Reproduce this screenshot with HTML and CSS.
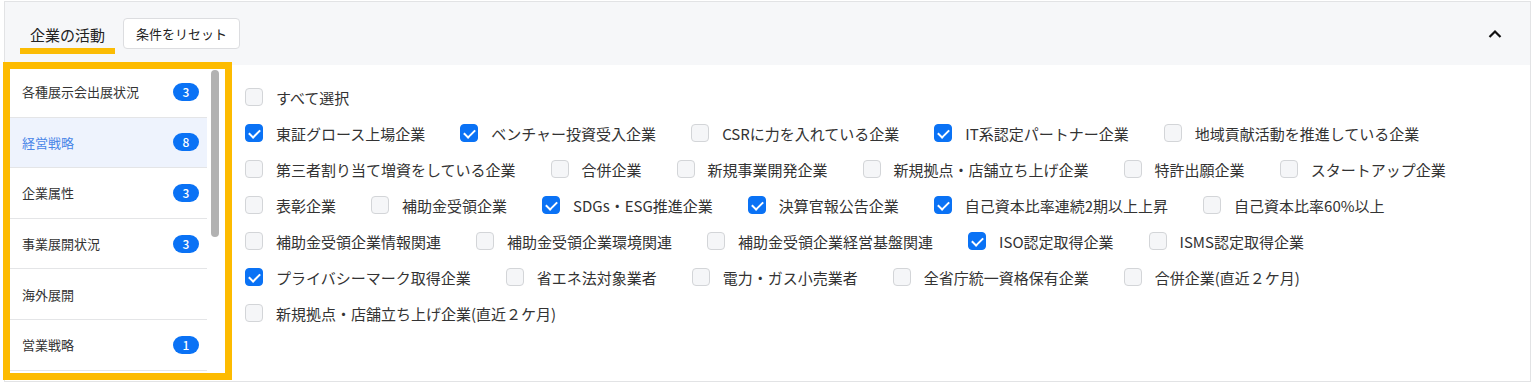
FILE: index.html
```html
<!DOCTYPE html>
<html lang="ja">
<head>
<meta charset="utf-8">
<link rel="stylesheet" href="styles.css">
</head>
<body>
<div class="card">
  <div class="card-header">
    <div class="tab">企業の活動</div>
    <button class="reset-btn">条件をリセット</button>
    <div class="spacer"></div>
    <svg class="chevron" width="14" height="10" viewBox="0 0 14 10"><path d="M1.5 8L7 2.5 12.5 8" fill="none" stroke="#111" stroke-width="2.2"/></svg>
  </div>
  <div class="card-body">
    <div class="sidebar">
      <div class="side-scroll">
        <ul class="side-list">
          <li class="side-item first"><span>各種展示会出展状況</span><span class="badge">3</span></li>
          <li class="side-item active"><span>経営戦略</span><span class="badge">8</span></li>
          <li class="side-item"><span>企業属性</span><span class="badge">3</span></li>
          <li class="side-item"><span>事業展開状況</span><span class="badge">3</span></li>
          <li class="side-item"><span>海外展開</span></li>
          <li class="side-item"><span>営業戦略</span><span class="badge">1</span></li>
        </ul>
      </div>
      <div class="scrollbar"><div class="thumb"></div></div>
    </div>
    <div class="options">
      <div class="opt-row">
        <label class="opt"><span class="cb"></span><span class="lbl">すべて選択</span></label>
      </div>
      <div class="opt-wrap">
        <label class="opt"><span class="cb on"></span><span class="lbl">東証グロース上場企業</span></label>
        <label class="opt"><span class="cb on"></span><span class="lbl">ベンチャー投資受入企業</span></label>
        <label class="opt"><span class="cb"></span><span class="lbl">CSRに力を入れている企業</span></label>
        <label class="opt"><span class="cb on"></span><span class="lbl">IT系認定パートナー企業</span></label>
        <label class="opt"><span class="cb"></span><span class="lbl">地域貢献活動を推進している企業</span></label>
        <label class="opt"><span class="cb"></span><span class="lbl">第三者割り当て増資をしている企業</span></label>
        <label class="opt"><span class="cb"></span><span class="lbl">合併企業</span></label>
        <label class="opt"><span class="cb"></span><span class="lbl">新規事業開発企業</span></label>
        <label class="opt"><span class="cb"></span><span class="lbl">新規拠点・店舗立ち上げ企業</span></label>
        <label class="opt"><span class="cb"></span><span class="lbl">特許出願企業</span></label>
        <label class="opt"><span class="cb"></span><span class="lbl">スタートアップ企業</span></label>
        <label class="opt"><span class="cb"></span><span class="lbl">表彰企業</span></label>
        <label class="opt"><span class="cb"></span><span class="lbl">補助金受領企業</span></label>
        <label class="opt"><span class="cb on"></span><span class="lbl">SDGs・ESG推進企業</span></label>
        <label class="opt"><span class="cb on"></span><span class="lbl">決算官報公告企業</span></label>
        <label class="opt"><span class="cb on"></span><span class="lbl">自己資本比率連続2期以上上昇</span></label>
        <label class="opt"><span class="cb"></span><span class="lbl">自己資本比率60%以上</span></label>
        <label class="opt"><span class="cb"></span><span class="lbl">補助金受領企業情報関連</span></label>
        <label class="opt"><span class="cb"></span><span class="lbl">補助金受領企業環境関連</span></label>
        <label class="opt"><span class="cb"></span><span class="lbl">補助金受領企業経営基盤関連</span></label>
        <label class="opt"><span class="cb on"></span><span class="lbl">ISO認定取得企業</span></label>
        <label class="opt"><span class="cb"></span><span class="lbl">ISMS認定取得企業</span></label>
        <label class="opt"><span class="cb on"></span><span class="lbl">プライバシーマーク取得企業</span></label>
        <label class="opt"><span class="cb"></span><span class="lbl">省エネ法対象業者</span></label>
        <label class="opt"><span class="cb"></span><span class="lbl">電力・ガス小売業者</span></label>
        <label class="opt"><span class="cb"></span><span class="lbl">全省庁統一資格保有企業</span></label>
        <label class="opt"><span class="cb"></span><span class="lbl">合併企業(直近２ケ月)</span></label>
        <label class="opt"><span class="cb"></span><span class="lbl">新規拠点・店舗立ち上げ企業(直近２ケ月)</span></label>
      </div>
    </div>
  </div>
</div>
</body>
</html>
```
FILE: styles.css
```css
* { box-sizing: border-box; }
html, body { margin: 0; padding: 0; background: #fff; }
body {
  font-family: "Noto Sans CJK JP", "Noto Sans", sans-serif;
  color: #333;
  width: 1532px;
  height: 384px;
  overflow: hidden;
}
.card {
  margin: 1px 0 0 4px;
  width: 1527px;
  height: 381px;
  border: 1px solid #e2e3e5;
  background: #fff;
  display: flex;
  flex-direction: column;
}
.card-header {
  height: 63px;
  background: #f6f7f9;
  display: flex;
  align-items: flex-start;
  padding-left: 15px;
  padding-right: 28px;
  flex-shrink: 0;
}
.tab {
  margin-top: 23px;
  padding: 0 10px;
  height: 29px;
  font-size: 15px;
  line-height: 20px;
  color: #222;
  border-bottom: 6px solid #fbbc04;
  padding-bottom: 3px;
}
.reset-btn {
  margin-left: 8px;
  margin-top: 16px;
  height: 31px;
  padding: 0 12px;
  background: #fff;
  border: 1px solid #dcdde0;
  border-radius: 4px;
  font-family: inherit;
  font-size: 13px;
  color: #222;
  line-height: 29px;
}
.spacer { flex: 1; }
.chevron { margin-top: 27px; }
.card-body {
  flex: 1;
  display: flex;
  align-items: flex-start;
  min-height: 0;
}
.sidebar {
  margin: -3px 0 0 -2px;
  width: 229px;
  height: 318px;
  border: 7px solid #fdbb00;
  display: flex;
  flex-shrink: 0;
  background: #fff;
}
.side-scroll {
  width: 197px;
  height: 304px;
  overflow: hidden;
}
.side-list {
  list-style: none;
  margin: -2px 0 0 0;
  padding: 0;
}
.side-item {
  height: 50.6px;
  border-bottom: 1px solid #e4e5e7;
  display: flex;
  align-items: center;
  justify-content: space-between;
  padding: 0 8px 0 12px;
  font-size: 13px;
  color: #333;
}
.side-item.active {
  background: #eef3fd;
  color: #4a86e8;
}
.badge {
  width: 26px;
  height: 18px;
  border-radius: 9px;
  background: #0a72f5;
  color: #fff;
  font-size: 12px;
  font-weight: 500;
  line-height: 18px;
  text-align: center;
}
.scrollbar {
  margin-left: 4px;
  width: 8px;
  padding-top: 1px;
}
.thumb {
  width: 8px;
  height: 167px;
  border-radius: 4px;
  background: #b2b2b2;
}
.options {
  flex: 1;
  padding: 14px 13px 0 13px;
}
.opt-row, .opt-wrap {
  display: flex;
  flex-wrap: wrap;
  column-gap: 35px;
}
.opt {
  height: 36px;
  display: flex;
  align-items: center;
  gap: 13px;
  font-size: 15px;
  color: #333;
  white-space: nowrap;
}
.cb {
  width: 18px;
  height: 18px;
  border: 1px solid #d3d5d8;
  border-radius: 4px;
  background: #f5f6f8;
  flex-shrink: 0;
  position: relative;
}
.cb.on {
  background: #0a72f5;
  border-color: #0a72f5;
}
.cb.on::after {
  content: "";
  position: absolute;
  left: 5px;
  top: 2px;
  width: 5px;
  height: 9px;
  border-right: 2px solid #fff;
  border-bottom: 2px solid #fff;
  transform: rotate(45deg);
}
```
